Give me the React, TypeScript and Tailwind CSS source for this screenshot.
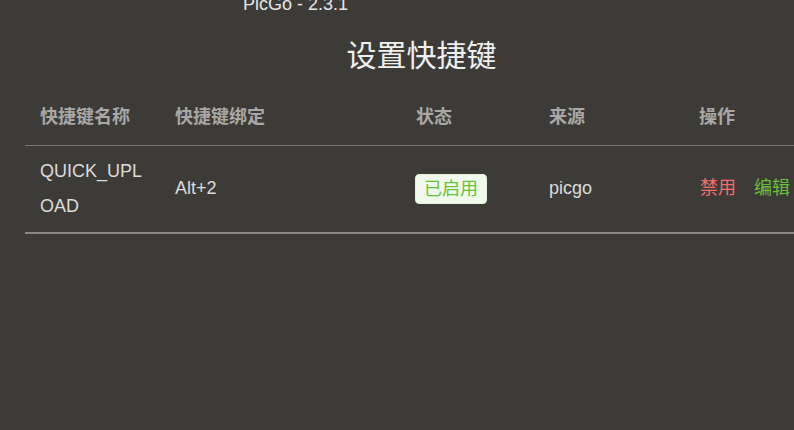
const rows = [
  { name: "QUICK_UPLOAD", key: "Alt+2", enabled: true, source: "picgo" },
];

const cols = [
  { title: "快捷键名称", w: "w-[135px]" },
  { title: "快捷键绑定", w: "w-[241px]" },
  { title: "状态", w: "w-[133px]" },
  { title: "来源", w: "w-[150px]" },
  { title: "操作", w: "w-[134px]" },
];

export default function App() {
  return (
    <div
      className="w-[794px] h-[430px] overflow-hidden bg-[#3d3b37] text-[#dcdcdc]"
      style={{ fontFamily: '"Liberation Sans", Arial, "Noto Sans CJK SC", sans-serif' }}
    >
      <div className="pl-[243px] -mt-[5px] text-[18px] leading-[18px] text-[#e6e6e6]">PicGo - 2.3.1</div>

      <div className="ml-[25px] w-[793px]">
        <h1 className="mt-[28px] text-center text-[30px] leading-[30px] font-normal text-[#f0f0f0]">设置快捷键</h1>

        <table className="mt-[20px] w-full table-fixed border-collapse text-[18px]">
          <thead>
            <tr className="h-[54px] border-b border-[#7a7875]">
              {cols.map((c) => (
                <th key={c.title} className={`${c.w} px-[15px] text-left font-bold text-[#a9a8a6]`}>
                  {c.title}
                </th>
              ))}
            </tr>
          </thead>
          <tbody>
            {rows.map((r) => (
              <tr key={r.name} className="h-[88px] border-b-2 border-[#8a8886]">
                <td className="px-[15px] leading-[35px] break-all">{r.name}</td>
                <td className="px-[15px]">{r.key}</td>
                <td className="px-[14px]">
                  <span className="inline-block rounded-[4px] border border-[#e1f3d8] bg-[#f0f9eb] px-[8px] leading-[28px] text-[18px] text-[#67c23a]">
                    已启用
                  </span>
                </td>
                <td className="px-[15px]">{r.source}</td>
                <td className="pl-[16px] pr-[15px] whitespace-nowrap">
                  <span className="text-[#f56c6c]">禁用</span>
                  <span className="ml-[18px] text-[#67c23a]">编辑</span>
                </td>
              </tr>
            ))}
          </tbody>
        </table>
      </div>
    </div>
  );
}
